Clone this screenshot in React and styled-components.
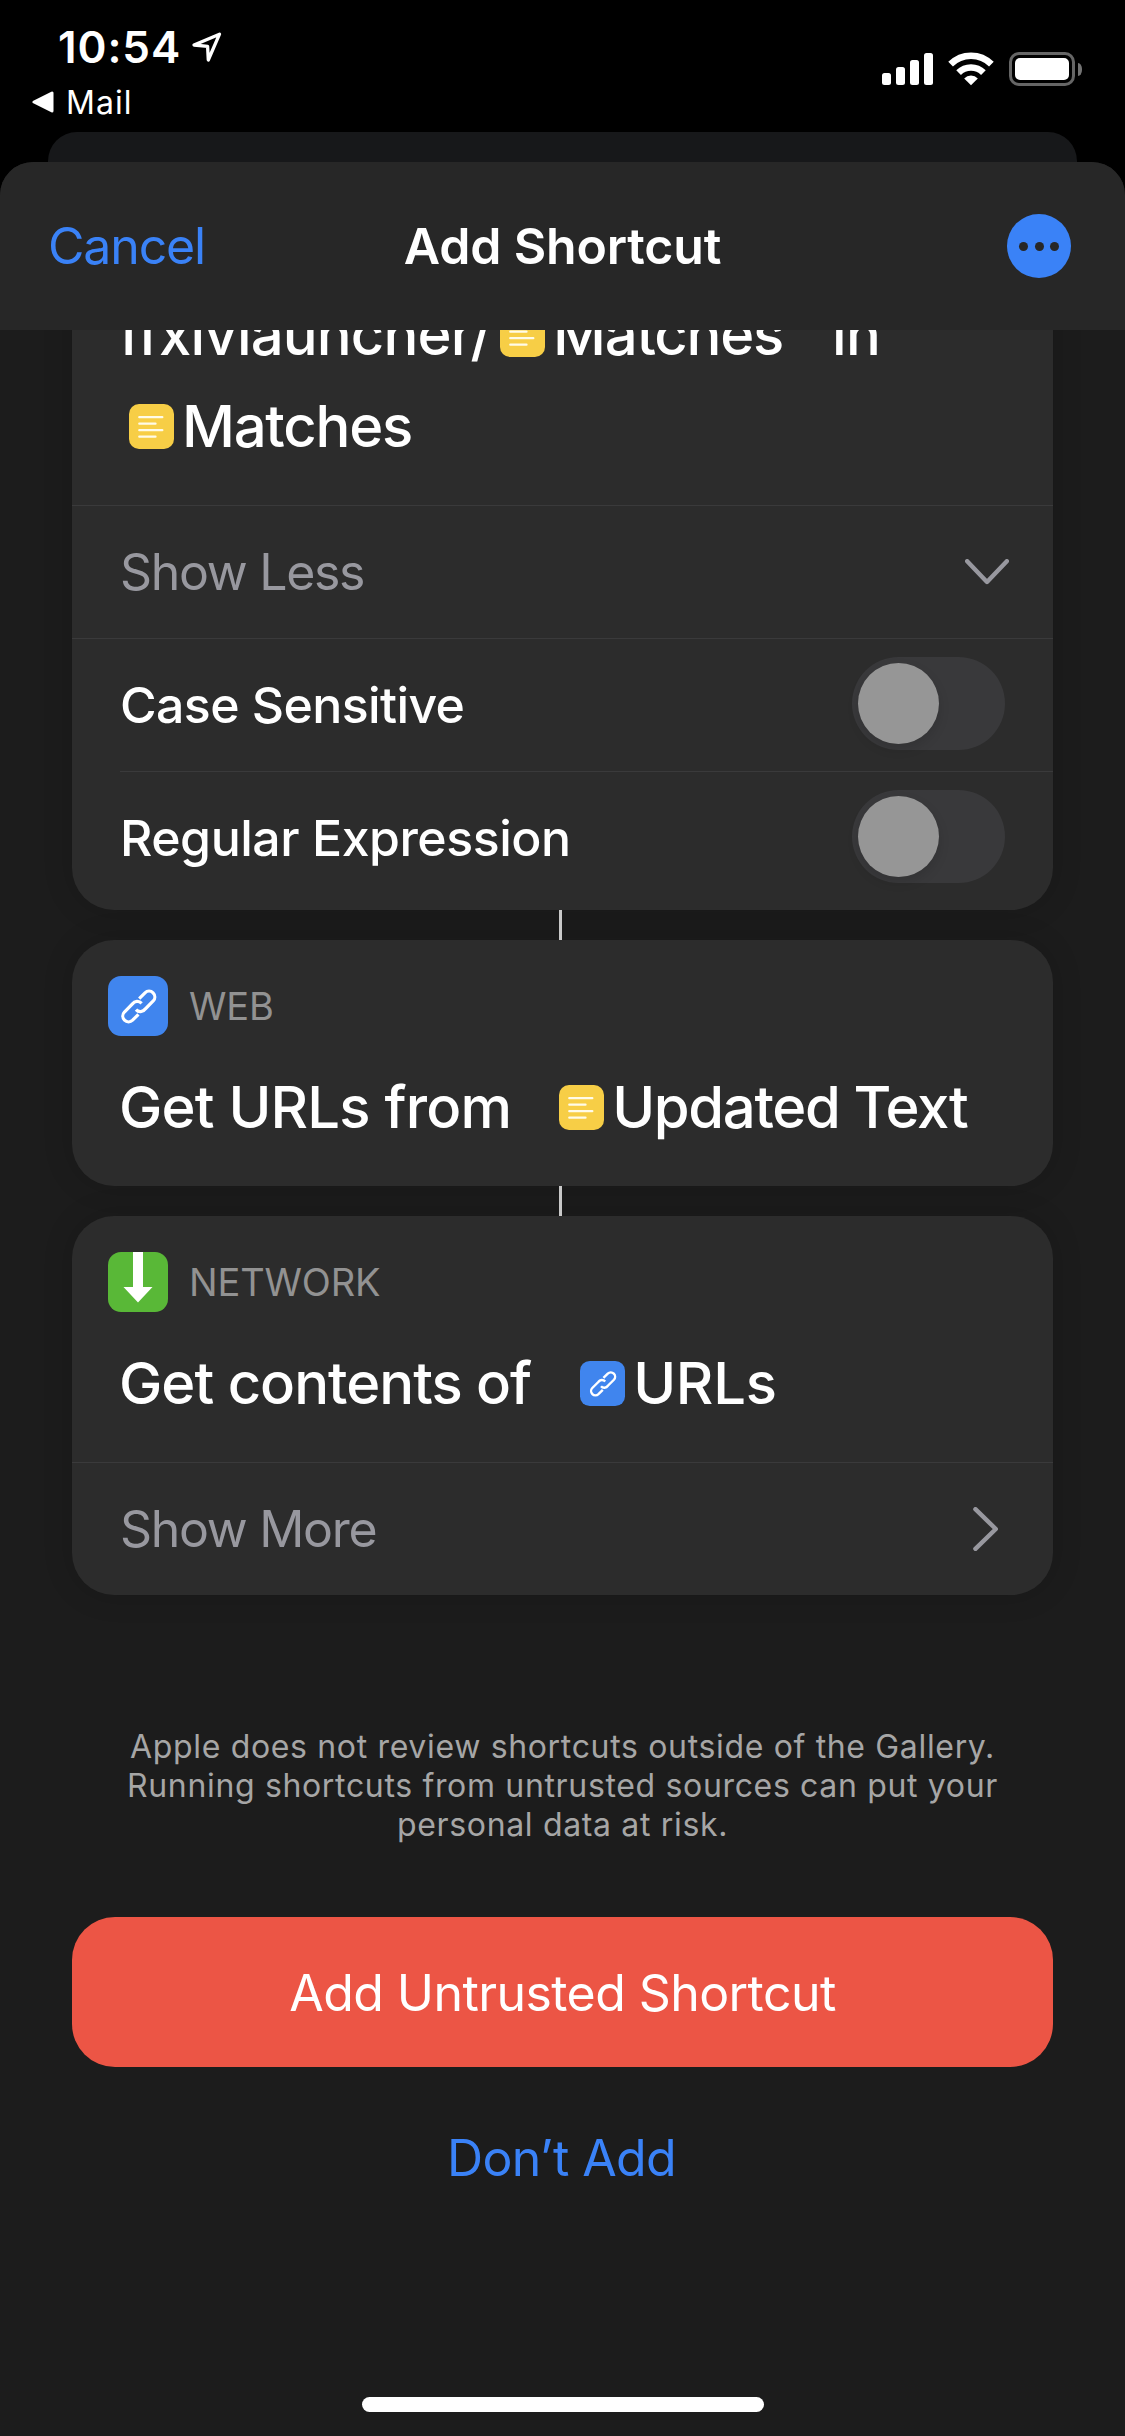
import React from 'react';
import styled, { createGlobalStyle } from 'styled-components';

const GlobalStyle = createGlobalStyle`
  * { box-sizing: border-box; }
  body {
    margin: 0;
    background: #000;
    color: #fff;
    font-family: Inter, "Liberation Sans", sans-serif;
  }
  svg { display: block; flex: none; }
`;

const Screen = styled.div`
  width: 1125px;
  height: 2436px;
  display: flex;
  flex-direction: column;
  background: #000;
  overflow: hidden;
`;

/* ---------- status bar ---------- */

const StatusBar = styled.div`
  height: 132px;
  flex: none;
  display: flex;
  justify-content: space-between;
`;

const StatusLeft = styled.div`
  display: flex;
  flex-direction: column;
  padding-top: 20px;
`;

const Clock = styled.div`
  display: flex;
  align-items: center;
  height: 54px;
  padding-left: 58px;
  gap: 10px;
  font-size: 44px;
  font-weight: 600;
  letter-spacing: 0.9px;
`;

const BackLink = styled.div`
  display: flex;
  align-items: center;
  height: 40px;
  margin-top: 8px;
  padding-left: 32px;
  gap: 12px;
  font-size: 32px;
  letter-spacing: 1px;
`;

const StatusRight = styled.div`
  display: flex;
  align-items: flex-start;
  padding: 52px 43px 0 0;
`;

const Signal = styled.div`
  display: flex;
  align-items: flex-end;
  gap: 5px;
  height: 33px;
  margin-right: 15px;
`;

const Bar = styled.span`
  width: 9px;
  height: ${(p) => p.$h}px;
  border-radius: 2.5px;
  background: #fff;
`;

const Battery = styled.div`
  width: 66px;
  height: 34px;
  margin-left: 15px;
  padding: 3px;
  border: 3px solid #666;
  border-radius: 10px;
`;

const BatteryLevel = styled.div`
  width: 54px;
  height: 22px;
  border-radius: 5px;
  background: #fff;
`;

const BatteryNub = styled.div`
  width: 4px;
  height: 13px;
  margin: 11px 0 0 3px;
  border-radius: 0 4px 4px 0 / 0 6px 6px 0;
  background: #737373;
`;

/* ---------- sheet ---------- */

const BackSheet = styled.div`
  height: 30px;
  flex: none;
  margin: 0 48px;
  border-radius: 29px 29px 0 0;
  background: #17181a;
`;

const Sheet = styled.div`
  flex: 1;
  min-height: 0;
  display: flex;
  flex-direction: column;
  border-radius: 33px 33px 0 0;
  background: #1c1c1c;
  overflow: hidden;
`;

const Header = styled.header`
  height: 168px;
  flex: none;
  display: grid;
  grid-template-columns: 1fr auto 1fr;
  align-items: center;
  padding: 0 48px;
  background: #272727;
  font-size: 50px;
`;

const Cancel = styled.span`
  color: #3a82f7;
  letter-spacing: -1.15px;
`;

const Title = styled.span`
  font-weight: 600;
  letter-spacing: -0.17px;
`;

const More = styled.span`
  justify-self: end;
  display: flex;
  align-items: center;
  justify-content: center;
  gap: 6.5px;
  width: 64px;
  height: 64px;
  margin-right: 6px;
  border-radius: 50%;
  background: #3a82f7;
`;

const Dot = styled.i`
  width: 9px;
  height: 9px;
  border-radius: 50%;
  background: #272727;
`;

const Body = styled.main`
  flex: 1;
  min-height: 0;
  display: flex;
  flex-direction: column;
  padding: 0 72px;
  overflow: hidden;
`;

/* ---------- action cards ---------- */

const Card = styled.section`
  flex: none;
  margin-top: ${(p) => (p.$scrolled ? '-100px' : 0)};
  padding-top: ${(p) => (p.$scrolled ? '58px' : '36px')};
  padding-bottom: ${(p) => p.$bottom || 0}px;
  border-radius: 42px;
  background: #2c2c2c;
  box-shadow: 0 0 30px rgba(0, 0, 0, 0.16);
`;

const Connector = styled.div`
  flex: none;
  position: relative;
  width: 3px;
  height: 30px;
  margin-left: 487px;
  background: #c8c8c8;
`;

const Category = styled.div`
  display: flex;
  align-items: center;
  height: 60px;
  margin-bottom: 25px;
  padding-left: 36px;
  gap: 21px;
  color: #929292;
  font-size: 38px;
  letter-spacing: -0.15px;
`;

const Action = styled.div`
  display: flex;
  align-items: center;
  height: 92px;
  padding-left: 47px;
  font-size: 58px;
  font-weight: 500;
  white-space: nowrap;
`;

const ActionBlock = styled.div`
  padding-bottom: 33px;
`;

const Word = styled.span`
  letter-spacing: ${(p) => p.$track}px;
`;

const Token = styled.span`
  display: inline-flex;
  align-items: center;
  gap: ${(p) => p.$gap || 8}px;
  margin: 0 ${(p) => p.$after || 0}px 0 ${(p) => p.$before}px;
  letter-spacing: ${(p) => p.$track}px;
`;

const Row = styled.div`
  display: flex;
  align-items: center;
  justify-content: space-between;
  height: 133px;
  margin-left: ${(p) => (p.$inset ? 48 : 0)}px;
  padding: 0 48px 0 ${(p) => (p.$inset ? 0 : 48)}px;
  border-top: 1px solid #3a3a3b;
  color: ${(p) => (p.$muted ? '#98989f' : '#fff')};
  font-size: 50px;
  font-weight: ${(p) => (p.$muted ? 400 : 500)};
  letter-spacing: ${(p) => p.$track}px;
`;

const Switch = styled.span`
  display: flex;
  align-items: center;
  width: 153px;
  height: 93px;
  margin-bottom: 3px;
  padding: 6px;
  border-radius: 47px;
  background: #39393b;
`;

const Thumb = styled.span`
  width: 81px;
  height: 81px;
  border-radius: 50%;
  background: #969696;
  box-shadow: 0 5px 12px rgba(0, 0, 0, 0.12);
`;

/* ---------- footer ---------- */

const Disclaimer = styled.p`
  margin: 132px 0 73px;
  color: #a6a6a6;
  font-size: 32px;
  line-height: 39px;
  letter-spacing: 0.66px;
  text-align: center;
`;

const AddButton = styled.div`
  flex: none;
  display: flex;
  align-items: center;
  justify-content: center;
  height: 150px;
  padding-top: 2px;
  border-radius: 43px;
  background: #ec5545;
  font-size: 50px;
  letter-spacing: -0.57px;
`;

const DontAdd = styled.div`
  margin: 61px 2px 0 0;
  color: #3a82f7;
  font-size: 50px;
  line-height: 60px;
  letter-spacing: -0.6px;
  text-align: center;
`;

const HomeIndicator = styled.div`
  flex: none;
  width: 402px;
  height: 15px;
  margin: auto auto 24px 290px;
  border-radius: 8px;
  background: #fff;
`;

/* ---------- icons ---------- */

const LocationArrow = () => (
  <svg width="32" height="32" viewBox="0 0 32 32">
    <path d="M3 14 L28.5 3.2 L17.3 29 L16.6 15.3 Z" fill="none" stroke="#fff" strokeWidth="3.3" strokeLinejoin="round" />
  </svg>
);

const BackTriangle = () => (
  <svg width="22" height="22" viewBox="0 0 22 22">
    <path d="M2 11 L20 2 V20 Z" fill="#fff" stroke="#fff" strokeWidth="3" strokeLinejoin="round" />
  </svg>
);

const Wifi = () => (
  <svg width="46" height="34" viewBox="0 0 46 34">
    <g fill="none" stroke="#fff" strokeWidth="6.6">
      <path d="M2.6 12.2 A28.8 28.8 0 0 1 43.4 12.2" />
      <path d="M10.6 20.6 A17.5 17.5 0 0 1 35.4 20.6" />
    </g>
    <path d="M23 33.3 L16.2 26.4 A9.6 9.6 0 0 1 29.8 26.4 Z" fill="#fff" />
  </svg>
);

const TextIcon = () => (
  <svg width="45" height="45" viewBox="0 0 45 45">
    <rect width="45" height="45" rx="10" fill="#f7ce46" />
    <path d="M10.3 13.2 H33.3 M10.3 19.7 H26.5 M10.3 26.2 H33.3 M10.3 32.7 H26.5" stroke="#fffbe8" strokeWidth="2.3" strokeLinecap="round" />
  </svg>
);

const LinkIcon = ({ size, radius }) => (
  <svg width={size} height={size} viewBox="0 0 60 60">
    <rect width="60" height="60" rx={radius} fill="#4085ee" />
    <g fill="none" stroke="#fff" strokeWidth="3.2">
      <path d="M31.2 22.6 L37 16.8 A5.8 5.8 0 0 1 45.2 25 L37.2 33 A5.8 5.8 0 0 1 28 33.6" />
      <path d="M30.4 38.4 L24.6 44.2 A5.8 5.8 0 0 1 16.4 36 L24.4 28 A5.8 5.8 0 0 1 33.6 27.4" />
    </g>
  </svg>
);

const DownloadIcon = () => (
  <svg width="60" height="60" viewBox="0 0 60 60">
    <rect width="60" height="60" rx="13" fill="#59b837" />
    <path d="M25 0 H35 V35 H44.5 L30 50.5 L15.5 35 H25 Z" fill="#fff" />
  </svg>
);

const ChevronDown = () => (
  <svg width="44" height="26" viewBox="0 0 44 26">
    <path d="M2.2 2.2 L22 23 L41.8 2.2" fill="none" stroke="#98989f" strokeWidth="4.4" strokeLinecap="round" strokeLinejoin="round" />
  </svg>
);

const ChevronRight = () => (
  <svg width="26" height="44" viewBox="0 0 26 44">
    <path d="M2.4 2.2 L22.8 22 L2.4 41.8" fill="none" stroke="#98989f" strokeWidth="4.4" strokeLinecap="round" strokeLinejoin="round" />
  </svg>
);

const ChevronSlot = styled.span`
  display: flex;
  margin: 0 ${(p) => p.$right}px 1px 0;
`;

const Toggle = () => (
  <Switch>
    <Thumb />
  </Switch>
);

export default function App() {
  return (
    <>
      <GlobalStyle />
      <Screen>
        <StatusBar>
          <StatusLeft>
            <Clock>
              10:54
              <LocationArrow />
            </Clock>
            <BackLink>
              <BackTriangle />
              Mail
            </BackLink>
          </StatusLeft>
          <StatusRight>
            <Signal>
              <Bar $h={12} />
              <Bar $h={18} />
              <Bar $h={25} />
              <Bar $h={32} />
            </Signal>
            <Wifi />
            <Battery>
              <BatteryLevel />
            </Battery>
            <BatteryNub />
          </StatusRight>
        </StatusBar>
        <BackSheet />
        <Sheet>
          <Header>
            <Cancel>Cancel</Cancel>
            <Title>Add Shortcut</Title>
            <More>
              <Dot />
              <Dot />
              <Dot />
            </More>
          </Header>
          <Body>
            <Card $scrolled $bottom={6}>
              <ActionBlock>
                <Action>
                  <Word $track={-0.85}>ffxivlauncher/</Word>
                  <Token $before={9} $after={49} $track={-1.25}>
                    <TextIcon />
                    Matches
                  </Token>
                  <Word $track={-0.6}>in</Word>
                </Action>
                <Action>
                  <Token $before={10} $track={-1.25}>
                    <TextIcon />
                    Matches
                  </Token>
                </Action>
              </ActionBlock>
              <Row $muted $track={-1.3}>
                Show Less
                <ChevronSlot $right={-4}>
                  <ChevronDown />
                </ChevronSlot>
              </Row>
              <Row $track={-0.6}>
                Case Sensitive
                <Toggle />
              </Row>
              <Row $inset $track={-0.48}>
                Regular Expression
                <Toggle />
              </Row>
            </Card>
            <Connector />
            <Card>
              <Category>
                <LinkIcon size={60} radius={13} />
                WEB
              </Category>
              <ActionBlock>
                <Action>
                  <Word $track={-0.8}>Get URLs from</Word>
                  <Token $before={48} $track={-1.33}>
                    <TextIcon />
                    Updated Text
                  </Token>
                </Action>
              </ActionBlock>
            </Card>
            <Connector />
            <Card>
              <Category>
                <DownloadIcon />
                NETWORK
              </Category>
              <ActionBlock>
                <Action>
                  <Word $track={-1.0}>Get contents of</Word>
                  <Token $before={49} $track={-0.2}>
                    <LinkIcon size={45} radius={13} />
                    URLs
                  </Token>
                </Action>
              </ActionBlock>
              <Row $muted $track={-1.3}>
                Show More
                <ChevronSlot $right={6}>
                  <ChevronRight />
                </ChevronSlot>
              </Row>
            </Card>
            <Disclaimer>
              Apple does not review shortcuts outside of the Gallery.
              <br />
              Running shortcuts from untrusted sources can put your
              <br />
              personal data at risk.
            </Disclaimer>
            <AddButton>Add Untrusted Shortcut</AddButton>
            <DontAdd>Don’t Add</DontAdd>
            <HomeIndicator />
          </Body>
        </Sheet>
      </Screen>
    </>
  );
}
